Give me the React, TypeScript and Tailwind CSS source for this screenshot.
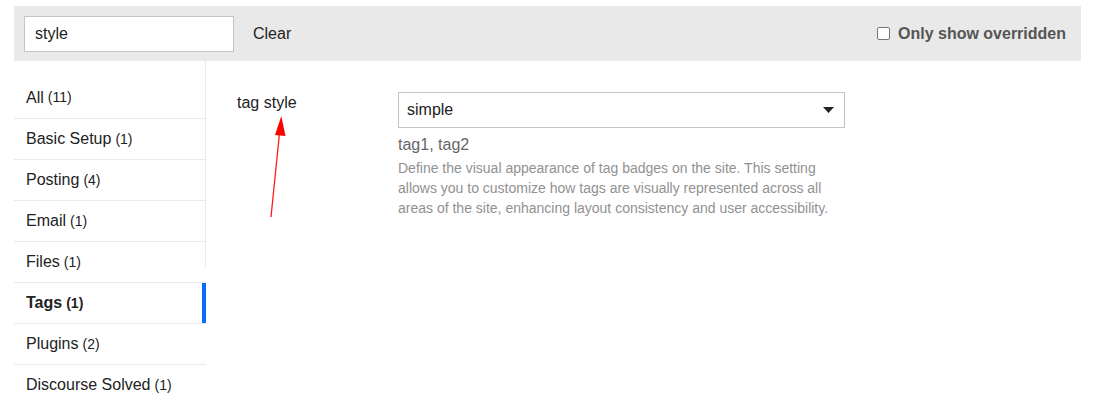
import React from 'react';

const categories = [
  { name: 'All', count: 11 },
  { name: 'Basic Setup', count: 1 },
  { name: 'Posting', count: 4 },
  { name: 'Email', count: 1 },
  { name: 'Files', count: 1 },
  { name: 'Tags', count: 1, active: true },
  { name: 'Plugins', count: 2 },
  { name: 'Discourse Solved', count: 1 },
];

const App = () => {
  return (
    <div className="relative w-[1094px] h-[420px] bg-white text-[#222] font-['Liberation_Sans',Arial,sans-serif] overflow-hidden">
      <div className="pt-[6px] pl-[14px] pr-[13px]">
        {/* filter bar */}
        <div className="flex items-center h-[55px] bg-[#e9e9e9] pl-[10px] pr-[15px]">
          <input
            readOnly
            value="style"
            className="w-[210px] h-[36px] bg-white border border-[#c4c4c4] px-[10px] text-[16px] text-[#222] outline-none"
          />
          <span className="ml-[19px] text-[16px]">Clear</span>
          <label className="ml-auto flex items-center gap-[8px] text-[16px] font-bold text-[#555]">
            <span className="w-[13px] h-[13px] border border-[#767676] rounded-[2px] bg-white" />
            Only show overridden
          </label>
        </div>

        <div className="flex">
          {/* sidebar */}
          <div className="relative w-[192px] pt-[16px]">
            <div className="absolute right-0 top-0 w-px h-[206px] bg-[#e9e9e9]" />
            {categories.map((c, i) => (
              <div
                key={c.name}
                className={`relative flex items-center h-[41px] pl-[12px] ${i > 0 ? 'border-t border-[#e9e9e9]' : ''}`}
              >
                <span className={`text-[16px] ${c.active ? 'font-bold' : ''}`}>{c.name}</span>
                <span className={`ml-[4px] text-[14px] ${c.active ? 'font-bold' : ''}`}>({c.count})</span>
                {c.active && <div className="absolute right-0 top-0 w-[4px] h-full bg-[#0a6aff]" />}
              </div>
            ))}
          </div>

          {/* setting */}
          <div className="flex pt-[31px] pl-[31px]">
            <div className="w-[161px] text-[16px] -mt-[1px]">tag style</div>
            <div className="w-[447px]">
              <div className="flex items-center justify-between h-[36px] border border-[#c4c4c4] px-[8px]">
                <span className="text-[16px]">simple</span>
                <svg width="11" height="6" viewBox="0 0 11 6" className="mr-[2px]">
                  <path d="M0 0 L11 0 L5.5 6 Z" fill="#222" />
                </svg>
              </div>
              <div className="mt-[5px] text-[16px] text-[#666]">tag1, tag2</div>
              <p className="mt-[1px] w-[440px] text-[14px] leading-[20px] text-[#919191]">
                Define the visual appearance of tag badges on the site. This setting allows you to customize how tags are visually represented across all areas of the site, enhancing layout consistency and user accessibility.
              </p>
            </div>
          </div>
        </div>
      </div>

      {/* annotation arrow */}
      <svg className="absolute left-0 top-0 pointer-events-none" width="1094" height="420">
        <line x1="271" y1="217" x2="279.5" y2="133" stroke="#ff1a1a" strokeWidth="1.3" />
        <path d="M281.3 116 L275 135 L285.5 136 Z" fill="#ff0000" />
      </svg>
    </div>
  );
};

export default App;
